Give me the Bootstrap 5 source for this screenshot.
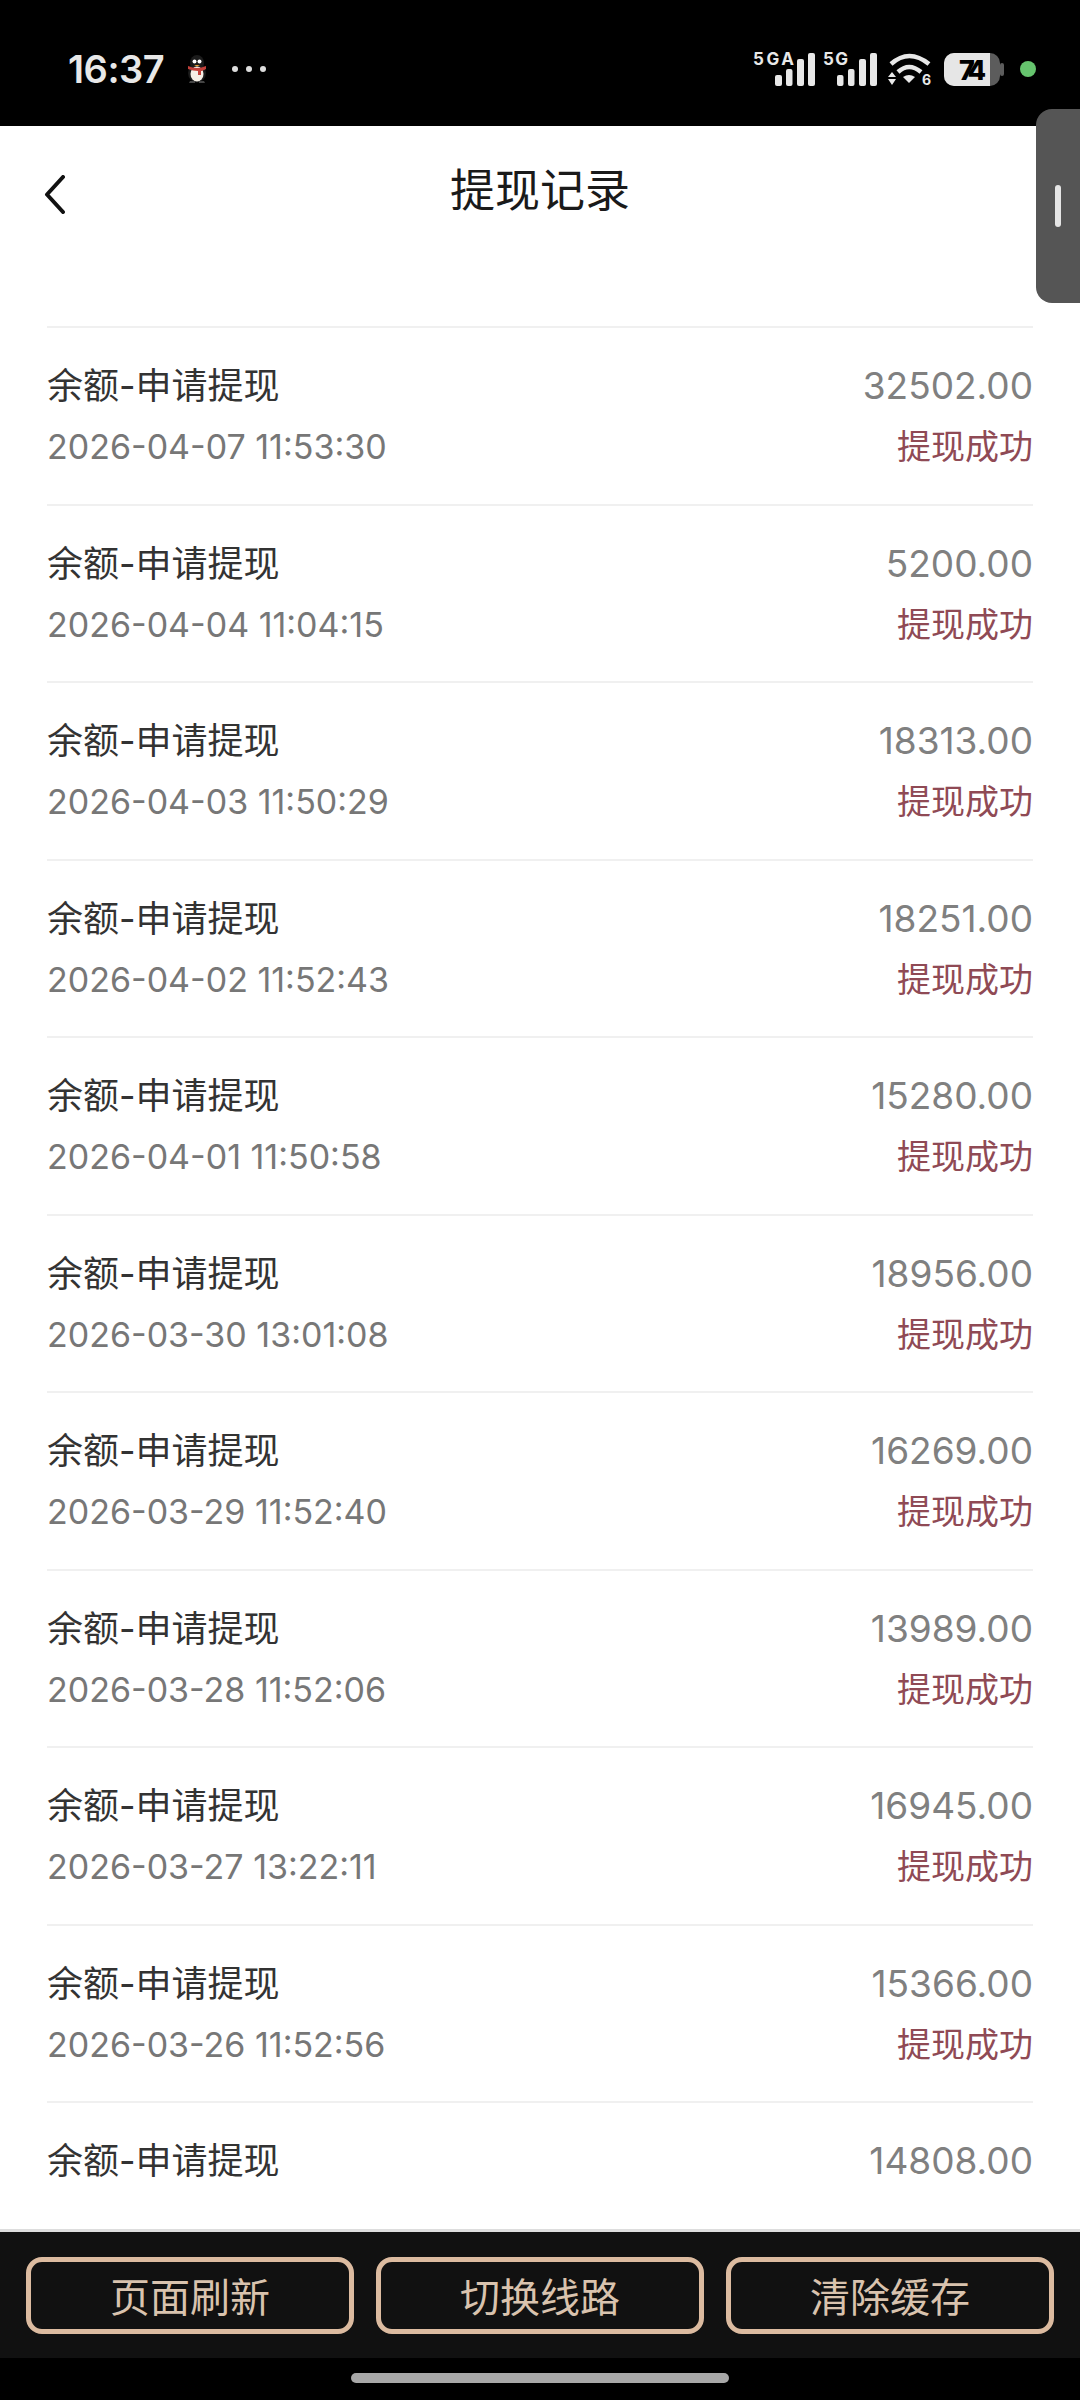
<!DOCTYPE html>
<html lang="zh-CN">
<head>
<meta charset="utf-8">
<title>提现记录</title>
<link href="https://cdn.jsdelivr.net/npm/bootstrap@5.3.0/dist/css/bootstrap.min.css" rel="stylesheet">
<style>
html,body{margin:0;background:#fff}
body{font-family:"Inter","Noto Sans CJK SC",sans-serif}
.phone{width:1080px;height:2400px;overflow:hidden;position:relative}
.sbar{height:126px;background:#000;padding:12px 44px 0 68px;color:#e8e8e8}
.clock{font-size:38px;font-weight:600;letter-spacing:-.5px;line-height:1;width:94px;white-space:nowrap}
.sdots{gap:8px}
.sdots i{display:block;width:6px;height:6px;border-radius:50%;background:#ddd}
.gdot{width:16px;height:16px;border-radius:50%;background:#66c46e}
svg{display:block;flex:none}
svg text{font-family:"Inter",sans-serif}
.hdr{height:200px;padding:24px 0 0 44px;position:relative}
.hdr-title{font-size:45px;line-height:76px;color:#1a1a1a;font-family:"Noto Sans CJK SC",sans-serif;position:absolute;left:0;right:0;top:24px;text-align:center}
.recs{flex:1 1 auto;padding:0 47px;overflow:hidden}
.rec{height:177.5px;border-top:2px solid #f0f0f0;padding-top:36px}
.rec-title{font-size:36px;line-height:44px;color:#333;height:44px}
.rec-amt{font-size:37px;line-height:44px;color:#808080}
.rec-date{font-size:34px;line-height:44px;color:#777;margin-top:17px}
.rec-state{font-size:34px;line-height:44px;color:#8f4a55;margin-top:17px}
.foot{border-top:3px solid #ddd;background:#111;height:129px;padding:0 26px;gap:22px}
.foot .btn{flex:1 1 0;height:77px;border:5px solid #dcbba0;border-radius:16px;color:#d9c3ae;background:transparent;font-size:40px;line-height:1;font-family:"Noto Sans CJK SC",sans-serif;padding:0}
.homebar{height:42px;background:#000;padding-top:15px}
.homebar span{display:block;width:378px;height:10px;border-radius:5px;background:#a8a8a8}
.handle{position:absolute;right:0;top:109px;width:44px;height:194px;background:#555;border-radius:16px 0 0 16px}
.handle span{position:absolute;left:19px;top:76px;width:6px;height:42px;border-radius:3px;background:#e5e5e5}
</style>
</head>
<body>
<div class="phone d-flex flex-column">
  <div class="sbar d-flex align-items-center justify-content-between flex-shrink-0">
    <div class="d-flex align-items-center">
      <div class="clock">16:37</div>
      <svg class="ms-4" width="22" height="28" viewBox="0 0 22 28" aria-label="QQ">
        <ellipse cx="11" cy="8" rx="7" ry="8" fill="#1b1b1b"/>
        <ellipse cx="11" cy="18" rx="9" ry="9.5" fill="#1b1b1b"/>
        <ellipse cx="11" cy="19" rx="6.5" ry="7.5" fill="#f5efe6"/>
        <path d="M2 11q9 4 18 0v3q-4 2-5 2v4h-3v-4q-5 0-10-2z" fill="#c2403a"/>
        <circle cx="8.5" cy="6.5" r="2" fill="#fff"/><circle cx="13.5" cy="6.5" r="2" fill="#fff"/>
        <path d="M8 10h6l-3 1.500z" fill="#e8a13a"/>
        <path d="M4 26h5v2H3zM13 26h5l1 2h-6z" fill="#444"/>
      </svg>
      <div class="sdots d-flex ms-4"><i></i><i></i><i></i></div>
    </div>
    <div class="d-flex align-items-center">
      <svg width="62" height="36" viewBox="0 0 62 36">
        <text x="0" y="14" font-size="17" font-weight="700" fill="#e8e8e8" textLength="41">5GA</text>
        <rect x="22" y="24" width="7" height="11" rx="2" fill="#e8e8e8"/><rect x="33" y="18" width="6.500" height="17" rx="2" fill="#e8e8e8"/><rect x="44" y="8" width="7" height="27" rx="2" fill="#e8e8e8"/><rect x="55" y="2" width="7" height="33" rx="2" fill="#e8e8e8"/>
      </svg>
      <svg style="margin-left:8px" width="54" height="36" viewBox="0 0 54 36">
        <text x="0" y="14" font-size="17" font-weight="700" fill="#e8e8e8" textLength="25">5G</text>
        <rect x="14" y="24" width="6.500" height="11" rx="2" fill="#e8e8e8"/><rect x="25" y="18" width="6.500" height="17" rx="2" fill="#e8e8e8"/><rect x="36" y="8" width="7" height="27" rx="2" fill="#e8e8e8"/><rect x="47" y="2" width="7" height="33" rx="2" fill="#e8e8e8"/>
      </svg>
      <svg style="margin-left:11px" width="44" height="33" viewBox="0 0 44 33">
        <path d="M3 11Q21-5 41 11" fill="none" stroke="#e8e8e8" stroke-width="4.500"/>
        <path d="M10 19Q21 9 33 19" fill="none" stroke="#e8e8e8" stroke-width="4.500"/>
        <path d="M15 24q6-4 12 0l-6 6z" fill="#e8e8e8"/>
        <path d="M0 24l4-5 4 5zM0 26h8l-4 6z" fill="#e8e8e8"/>
        <text x="34" y="32" font-size="14" font-weight="700" fill="#e8e8e8">6</text>
      </svg>
      <svg style="margin-left:12px" width="60" height="33" viewBox="0 0 60 33">
        <rect x="0" y="0" width="56" height="33" rx="10" fill="#5c5c5c"/>
        <path d="M10 0h36v33H10a10 10 0 0 1-10-10V10A10 10 0 0 1 10 0z" fill="#e6e6e6"/>
        <rect x="56" y="10" width="4" height="13" rx="2" fill="#5c5c5c"/>
        <text x="15" y="27" font-size="27" font-weight="800" fill="#000" textLength="27">74</text>
      </svg>
      <div class="gdot ms-3"></div>
    </div>
  </div>

  <div class="hdr flex-shrink-0">
    <svg class="position-relative" style="top:25px" width="21" height="39" viewBox="0 0 21 39" aria-label="返回">
      <path d="M19 2L3 19.500 19 37" fill="none" stroke="#111" stroke-width="4" stroke-linecap="round" stroke-linejoin="round"/>
    </svg>
    <div class="hdr-title">提现记录</div>
  </div>

  <div class="recs">
    <div class="rec"><div class="d-flex justify-content-between"><div class="rec-title">余额-申请提现</div><div class="rec-amt">32502.00</div></div><div class="d-flex justify-content-between"><div class="rec-date">2026-04-07 11:53:30</div><div class="rec-state">提现成功</div></div></div>
    <div class="rec"><div class="d-flex justify-content-between"><div class="rec-title">余额-申请提现</div><div class="rec-amt">5200.00</div></div><div class="d-flex justify-content-between"><div class="rec-date">2026-04-04 11:04:15</div><div class="rec-state">提现成功</div></div></div>
    <div class="rec"><div class="d-flex justify-content-between"><div class="rec-title">余额-申请提现</div><div class="rec-amt">18313.00</div></div><div class="d-flex justify-content-between"><div class="rec-date">2026-04-03 11:50:29</div><div class="rec-state">提现成功</div></div></div>
    <div class="rec"><div class="d-flex justify-content-between"><div class="rec-title">余额-申请提现</div><div class="rec-amt">18251.00</div></div><div class="d-flex justify-content-between"><div class="rec-date">2026-04-02 11:52:43</div><div class="rec-state">提现成功</div></div></div>
    <div class="rec"><div class="d-flex justify-content-between"><div class="rec-title">余额-申请提现</div><div class="rec-amt">15280.00</div></div><div class="d-flex justify-content-between"><div class="rec-date">2026-04-01 11:50:58</div><div class="rec-state">提现成功</div></div></div>
    <div class="rec"><div class="d-flex justify-content-between"><div class="rec-title">余额-申请提现</div><div class="rec-amt">18956.00</div></div><div class="d-flex justify-content-between"><div class="rec-date">2026-03-30 13:01:08</div><div class="rec-state">提现成功</div></div></div>
    <div class="rec"><div class="d-flex justify-content-between"><div class="rec-title">余额-申请提现</div><div class="rec-amt">16269.00</div></div><div class="d-flex justify-content-between"><div class="rec-date">2026-03-29 11:52:40</div><div class="rec-state">提现成功</div></div></div>
    <div class="rec"><div class="d-flex justify-content-between"><div class="rec-title">余额-申请提现</div><div class="rec-amt">13989.00</div></div><div class="d-flex justify-content-between"><div class="rec-date">2026-03-28 11:52:06</div><div class="rec-state">提现成功</div></div></div>
    <div class="rec"><div class="d-flex justify-content-between"><div class="rec-title">余额-申请提现</div><div class="rec-amt">16945.00</div></div><div class="d-flex justify-content-between"><div class="rec-date">2026-03-27 13:22:11</div><div class="rec-state">提现成功</div></div></div>
    <div class="rec"><div class="d-flex justify-content-between"><div class="rec-title">余额-申请提现</div><div class="rec-amt">15366.00</div></div><div class="d-flex justify-content-between"><div class="rec-date">2026-03-26 11:52:56</div><div class="rec-state">提现成功</div></div></div>
    <div class="rec"><div class="d-flex justify-content-between"><div class="rec-title">余额-申请提现</div><div class="rec-amt">14808.00</div></div></div>
  </div>

  <div class="foot d-flex align-items-center flex-shrink-0">
    <button type="button" class="btn">页面刷新</button>
    <button type="button" class="btn">切换线路</button>
    <button type="button" class="btn">清除缓存</button>
  </div>
  <div class="homebar d-flex justify-content-center flex-shrink-0"><span></span></div>
  <div class="handle"><span></span></div>
</div>
<script src="https://cdn.jsdelivr.net/npm/bootstrap@5.3.0/dist/js/bootstrap.bundle.min.js"></script>
</body>
</html>
